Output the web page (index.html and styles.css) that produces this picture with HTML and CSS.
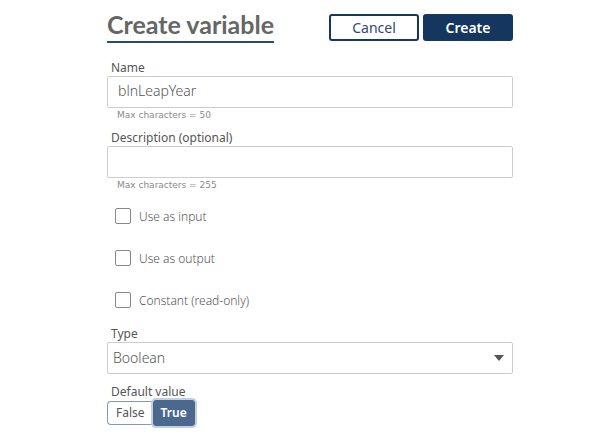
FILE: index.html
```html
<!DOCTYPE html>
<html lang="en">
<head>
<meta charset="utf-8">
<meta name="viewport" content="width=device-width, initial-scale=1">
<title>Create variable</title>
<link rel="stylesheet" href="styles.css">
</head>
<body>
<form class="variable-form">
  <header class="header">
    <h1 class="title">Create variable</h1>
    <div class="actions">
      <button class="button" type="button">Cancel</button>
      <button class="button button-primary" type="button">Create</button>
    </div>
  </header>
  <div class="field">
    <label class="label" for="name">Name</label>
    <input class="control" id="name" type="text" maxlength="50" value="blnLeapYear">
    <p class="hint">Max characters = 50</p>
  </div>
  <div class="field">
    <label class="label" for="description">Description (optional)</label>
    <input class="control" id="description" type="text" maxlength="255">
    <p class="hint">Max characters = 255</p>
  </div>
  <div class="checks">
    <label class="check"><input class="box" type="checkbox">Use as input</label>
    <label class="check"><input class="box" type="checkbox">Use as output</label>
    <label class="check"><input class="box" type="checkbox">Constant (read-only)</label>
  </div>
  <div class="field">
    <label class="label" for="type">Type</label>
    <div class="select-wrap">
      <select class="control select" id="type"><option>Boolean</option></select>
      <svg class="arrow" viewBox="0 0 10 6" aria-hidden="true"><path d="M0 0h10L5 6z"/></svg>
    </div>
  </div>
  <div class="field field-default">
    <span class="label" id="default-label">Default value</span>
    <div class="toggle" role="group" aria-labelledby="default-label">
      <button class="choice" type="button" aria-pressed="false">False</button>
      <button class="choice choice-on" type="button" aria-pressed="true">True</button>
    </div>
  </div>
</form>
</body>
</html>
```
FILE: styles.css
```css
* {
  box-sizing: border-box;
}

body {
  margin: 0;
  background: #fff;
  color: #555;
  font-family: "Noto Sans", sans-serif;
  font-size: 12px;
}

.variable-form {
  display: flex;
  flex-direction: column;
  gap: 7px;
  padding: 11px 98px 8px 107px;
}

.header {
  display: flex;
  justify-content: space-between;
  align-items: flex-start;
  margin-bottom: 9px;
}

.title {
  margin: 0;
  padding-bottom: 3px;
  border-bottom: 2px solid #2e4a73;
  color: #666;
  font: bold 25px/27px Lato, sans-serif;
}

.actions {
  display: flex;
  gap: 4px;
  padding-top: 3px;
}

.button {
  width: 90px;
  height: 27px;
  padding: 0;
  border: 2px solid #14365f;
  border-radius: 3px;
  background: #fff;
  color: #2f4a70;
  font: 14px/20px "Noto Sans", sans-serif;
}

.button-primary {
  background: #14365f;
  color: #fff;
  font-weight: 600;
}

.field {
  display: flex;
  flex-direction: column;
}

.field-default {
  margin-top: 2px;
}

.label {
  padding-left: 4px;
  line-height: 17px;
}

.control {
  width: 100%;
  height: 32px;
  padding: 0 10px 3px;
  border: 1px solid #ccc;
  border-radius: 2px;
  background: #fff;
  color: #555;
  font: 300 14px/20px "Noto Sans", sans-serif;
}

.hint {
  margin: 0;
  padding-left: 10px;
  color: #8a8a8a;
  font: 9px/14px "DejaVu Sans", sans-serif;
}

.checks {
  display: flex;
  flex-direction: column;
  margin: -4px 0 -3px;
}

.check {
  display: flex;
  align-items: center;
  gap: 8px;
  height: 42px;
  padding-left: 8px;
  font-weight: 300;
}

.box {
  appearance: none;
  width: 16px;
  height: 16px;
  margin: 0;
  border: 1px solid #888;
  border-radius: 2px;
  background: #fff;
}

.box:checked {
  background: #4b698f;
}

.select-wrap {
  position: relative;
}

.select {
  display: block;
  appearance: none;
  padding: 0 5px;
}

.arrow {
  position: absolute;
  top: 13px;
  right: 9px;
  width: 10px;
  height: 6px;
  fill: #555;
  pointer-events: none;
}

.toggle {
  display: flex;
  align-items: center;
}

.choice {
  height: 24px;
  padding: 0 8px;
  border: 1px solid #8299b8;
  border-right: 0;
  border-radius: 4px 0 0 4px;
  background: #fff;
  color: #555;
  font: 12px/16px "Noto Sans", sans-serif;
}

.choice-on {
  height: 26px;
  padding: 0 7px;
  border: 1px solid #4b698f;
  border-radius: 3px;
  background: #4b698f;
  box-shadow: 0 0 0 2px #c3cfdf;
  color: #fff;
  font-weight: 600;
}
```
